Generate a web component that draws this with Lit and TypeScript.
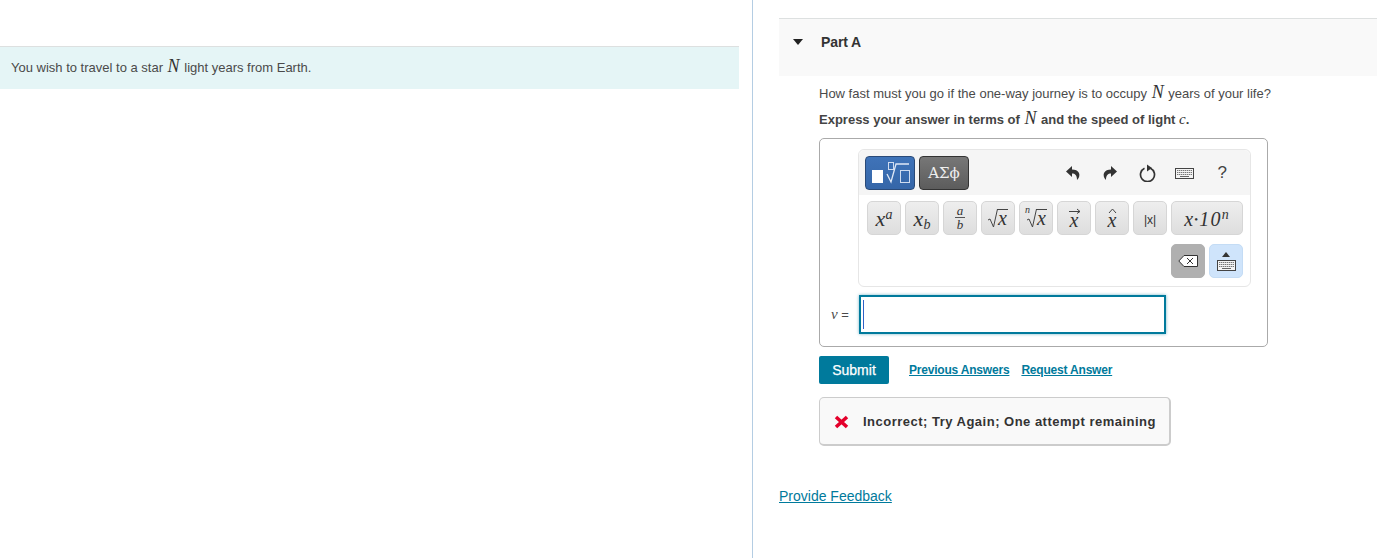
import { LitElement, html, css, svg } from "lit";
import { customElement } from "lit/decorators.js";

const keyboard = (w: number, h: number) => html`<svg width=${w} height=${h} viewBox="0 0 19 11">
  <rect x=".5" y=".5" width="18" height="10" fill="#f4f4f4" stroke="#444"/>
  ${[2.5, 4.5, 6.5].map((y) => svg`<path d="M2 ${y}h15" stroke="#777" stroke-dasharray="1.400 .6"/>`)}
  <path d="M5 8.500h9" stroke="#666"/>
</svg>`;

@customElement("app-root")
export class AppRoot extends LitElement {
  static styles = css`
    :host { display: block; width: 1377px; height: 558px; overflow: hidden; background: #fff; font-family: "Liberation Sans", Arial, sans-serif; color: #4a4a4a; font-size: 13px; }
    .page { display: grid; grid-template-columns: 739px 14px 1fr; height: 558px; }
    .left { padding-top: 46px; }
    .intro { height: 42px; border-top: 1px solid #dde0e0; background: #e5f5f6; display: flex; align-items: center; padding-left: 11px; line-height: 42px; white-space: pre; }
    .divider { border-right: 1px solid #b4cde3; }
    .right { padding: 18px 0 0 26px; }
    .m { font-family: "Liberation Serif", serif; font-style: italic; font-weight: normal; font-size: 18px; line-height: 1; color: #333; margin: 0 1px; }
    .m.s { font-size: 15px; margin: 0; }
    .part { height: 43px; border-top: 1px solid #dde0e0; background: #f9f9f9; display: flex; padding: 14px 0 0 14px; align-items: flex-start; }
    .tri { width: 0; height: 0; margin-top: 6px; border-left: 5.5px solid transparent; border-right: 5.5px solid transparent; border-top: 6px solid #222; }
    .part b { margin-left: 18px; color: #333; font-size: 14px; line-height: 18px; letter-spacing: -.1px; }
    .body { padding-left: 40px; }
    .q { height: 26px; line-height: 26px; white-space: pre; margin: 0; }
    .q.first { margin-top: 5px; }
    .q.bold { font-weight: bold; color: #444; }
    .answer { width: 447px; height: 197px; border: 1px solid #aaa; border-radius: 5px; margin-top: 5px; padding-top: 10px; }
    .tools { margin-left: 38px; width: 391px; height: 136px; border: 1px solid #e6e6e6; border-radius: 6px; }
    .top { height: 45px; background: #f5f5f5; border-radius: 6px 6px 0 0; display: flex; align-items: flex-start; padding: 6px 0 0 6px; box-sizing: border-box; }
    .tpl { width: 50px; height: 34px; box-sizing: border-box; border: 1px solid #333; border-radius: 4px; display: flex; align-items: center; justify-content: center; color: #fff; margin-right: 4px; }
    .tpl.blue { background: linear-gradient(#3f73b8, #3566a8); border-color: #2a4a78; }
    .tpl.grey { background: linear-gradient(#777, #5c5c5c); font-family: "DejaVu Serif", serif; font-size: 15px; color: #eee; }
    .acts { display: flex; margin-left: 81px; }
    .act { width: 37.4px; height: 34px; display: flex; align-items: center; justify-content: center; color: #444; font-size: 17px; }
    .row { display: flex; gap: 4px; padding-left: 8px; margin-top: 6px; }
    .row.second { justify-content: flex-end; padding-right: 7px; margin-top: 9px; }
    .key { width: 34px; height: 34px; box-sizing: border-box; border: 1px solid #d6d6d6; border-radius: 5px; background: linear-gradient(#eeeeee, #dedede); display: flex; align-items: center; justify-content: center; color: #333; font-family: "Liberation Serif", serif; font-style: italic; font-size: 22px; position: relative; line-height: 1; padding-top: 2px; }
    .key.wide { width: 72px; font-size: 20px; letter-spacing: 1.200px; }
    .key.small { font-family: "Liberation Sans", sans-serif; font-style: normal; font-size: 12px; font-weight: normal; padding-top: 3px; }
    .key.del, .key.kbd { padding-top: 0; }
    .key sup { font-size: 14px; position: relative; top: -7px; line-height: 0; vertical-align: baseline; }
    .key sub { font-size: 14px; position: relative; top: 3px; line-height: 0; vertical-align: baseline; }
    .dot { font-style: normal; font-size: 11px; position: relative; top: -3px; }
    .frac { display: flex; flex-direction: column; align-items: center; font-size: 13px; line-height: 12px; margin-top: -2px; }
    .frac i:first-child { border-bottom: 1px solid #555; padding: 0 2px 1px; line-height: 10px; }
    .frac i:last-child { line-height: 13px; }
    .acc { display: flex; flex-direction: column; align-items: center; line-height: 14px; margin-top: -3px; font-size: 20px; }
    .acc svg { display: block; margin-bottom: -1px; }
    .rad { display: flex; align-items: flex-start; position: relative; margin-top: -2px; }
    .rad span { border-top: 1px solid #444; line-height: 17px; padding: 0 1px; margin-left: -1px; font-size: 20px; }
    .rad small { position: absolute; left: 0; top: -4px; font-size: 10px; }
    .del { background: #b0b0b0; border-color: #b0b0b0; }
    .kbd { background: #cfe4fb; border-color: #c4dcf5; flex-direction: column; gap: 3px; }
    .up { width: 0; height: 0; border-left: 4px solid transparent; border-right: 4px solid transparent; border-bottom: 5px solid #333; }
    .input-row { display: flex; align-items: center; margin-top: 8px; }
    .label { width: 39px; box-sizing: border-box; padding-left: 11px; font-size: 13px; white-space: pre; }
    .label i { font-family: "Liberation Serif", serif; font-size: 15px; }
    .input { width: 307px; height: 39px; box-sizing: border-box; border: 2px solid #007a9c; box-shadow: 0 0 3px rgba(0, 122, 156, .55); padding: 3px 2px; background: #fff; }
    .caret { width: 1px; height: 29px; background: #2f62c8; }
    .actions { display: flex; align-items: center; margin-top: 9px; height: 28px; }
    .submit { width: 70px; height: 28px; background: #007a9c; color: #fff; border-radius: 2px; display: flex; align-items: center; justify-content: center; font-size: 14px; -webkit-text-stroke: .25px #fff; }
    a { color: #007a9c; text-decoration: underline; }
    .actions a { font-weight: bold; font-size: 12px; letter-spacing: -.2px; }
    .actions a.prev { margin-left: 20px; }
    .actions a.req { margin-left: 12px; }
    .fb { width: 352px; height: 49px; box-sizing: border-box; margin-top: 13px; border: 1px solid #ccc; border-bottom-width: 2px; border-right-width: 2px; border-radius: 5px; background: #f9f9f9; display: flex; align-items: center; padding: 1px 0 0 14px; }
    .fb b { margin-left: 14px; font-size: 13px; color: #333; letter-spacing: .49px; }
    .feedback { display: block; margin-top: 41px; font-size: 14px; line-height: 18px; width: max-content; }
  `;

  render() {
    const arrowUndo = html`<svg width="14" height="14" viewBox="0 0 14 14"><path d="M6 0 0 5.500 6 11V7.500c3 0 5 1.500 5 6.500 2-2 3-4.500 2-7C12 4.500 9 3.500 6 3.500z" fill="#333"/></svg>`;
    const arrowRedo = html`<svg width="14" height="14" viewBox="0 0 14 14"><path d="M8 0l6 5.500L8 11V7.500c-3 0-5 1.500-5 6.500C1 12 0 9.500 1 7c1-2.500 4-3.500 7-3.500z" fill="#333"/></svg>`;
    return html`<div class="page">
      <div class="left"><div class="intro"><span>You wish to travel to a star <span class="m">N</span> light years from Earth.</span></div></div>
      <div class="divider"></div>
      <div class="right">
        <div class="part"><span class="tri"></span><b>Part A</b></div>
        <div class="body">
          <p class="q first">How fast must you go if the one-way journey is to occupy <span class="m">N</span> years of your life?</p>
          <p class="q bold">Express your answer in terms of <span class="m">N</span> and the speed of light <span class="m s">c</span>.</p>
          <div class="answer">
            <div class="tools">
              <div class="top">
                <div class="tpl blue"><svg width="48" height="32" viewBox="0 0 48 32">
                  <rect x="6" y="13" width="11" height="13" fill="#fff"/>
                  <rect x="22.500" y="5.500" width="5" height="7" fill="none" stroke="#cfdcf0"/>
                  <path d="M21 17l4 8 5-18h13" fill="none" stroke="#dfe8f6" stroke-width="1.300"/>
                  <rect x="34.500" y="13.500" width="9" height="12" fill="none" stroke="#cfdcf0"/>
                </svg></div>
                <div class="tpl grey">ΑΣϕ</div>
                <div class="acts">
                  <div class="act">${arrowUndo}</div>
                  <div class="act">${arrowRedo}</div>
                  <div class="act"><svg width="17" height="18" viewBox="0 0 17 18"><path d="M11.500 4.300A7 7 0 1 1 5.500 4.300" fill="none" stroke="#333" stroke-width="1.700"/><path d="M8 .5l5 3.500-5 3.500z" fill="#333"/></svg></div>
                  <div class="act">${keyboard(19, 11)}</div>
                  <div class="act">?</div>
                </div>
              </div>
              <div class="row">
                <div class="key"><span>x<sup>a</sup></span></div>
                <div class="key"><span>x<sub>b</sub></span></div>
                <div class="key"><div class="frac"><i>a</i><i>b</i></div></div>
                <div class="key"><div class="rad"><svg width="10" height="19" viewBox="0 0 10 19"><path d="M0 11l2-1 3.500 8 4-18" fill="none" stroke="#444"/></svg><span>x</span></div></div>
                <div class="key"><div class="rad"><small>n</small><svg width="12" height="19" viewBox="0 0 12 19"><path d="M2 11l2-1 3.500 8 4-18" fill="none" stroke="#444"/></svg><span>x</span></div></div>
                <div class="key"><div class="acc"><svg width="13" height="6" viewBox="0 0 13 6"><path d="M1 3.500h11M9 1l3 2.500-3 2" fill="none" stroke="#444"/></svg><span>x</span></div></div>
                <div class="key"><div class="acc"><svg width="9" height="6" viewBox="0 0 9 6"><path d="M1 5l3.500-4L8 5" fill="none" stroke="#444"/></svg><span>x</span></div></div>
                <div class="key small">|x|</div>
                <div class="key wide"><span>x<span class="dot">•</span>10<sup>n</sup></span></div>
              </div>
              <div class="row second">
                <div class="key del"><svg width="20" height="12" viewBox="0 0 20 12"><path d="M6 .5h13.500v11H6L.8 6z" fill="#fff" stroke="#333"/><path d="M9 3l6 6m0-6-6 6" stroke="#333" fill="none"/></svg></div>
                <div class="key kbd"><span class="up"></span>${keyboard(19, 11)}</div>
              </div>
            </div>
            <div class="input-row">
              <div class="label"><i>v</i> =</div>
              <div class="input"><div class="caret"></div></div>
            </div>
          </div>
          <div class="actions">
            <div class="submit">Submit</div>
            <a class="prev" href="#">Previous Answers</a>
            <a class="req" href="#">Request Answer</a>
          </div>
          <div class="fb">
            <svg width="15" height="14" viewBox="0 0 15 14"><path d="M2 2l11 10M13 2 2 12" stroke="#e4002b" stroke-width="3.600"/></svg>
            <b>Incorrect; Try Again; One attempt remaining</b>
          </div>
        </div>
        <a class="feedback" href="#">Provide Feedback</a>
      </div>
    </div>`;
  }
}
